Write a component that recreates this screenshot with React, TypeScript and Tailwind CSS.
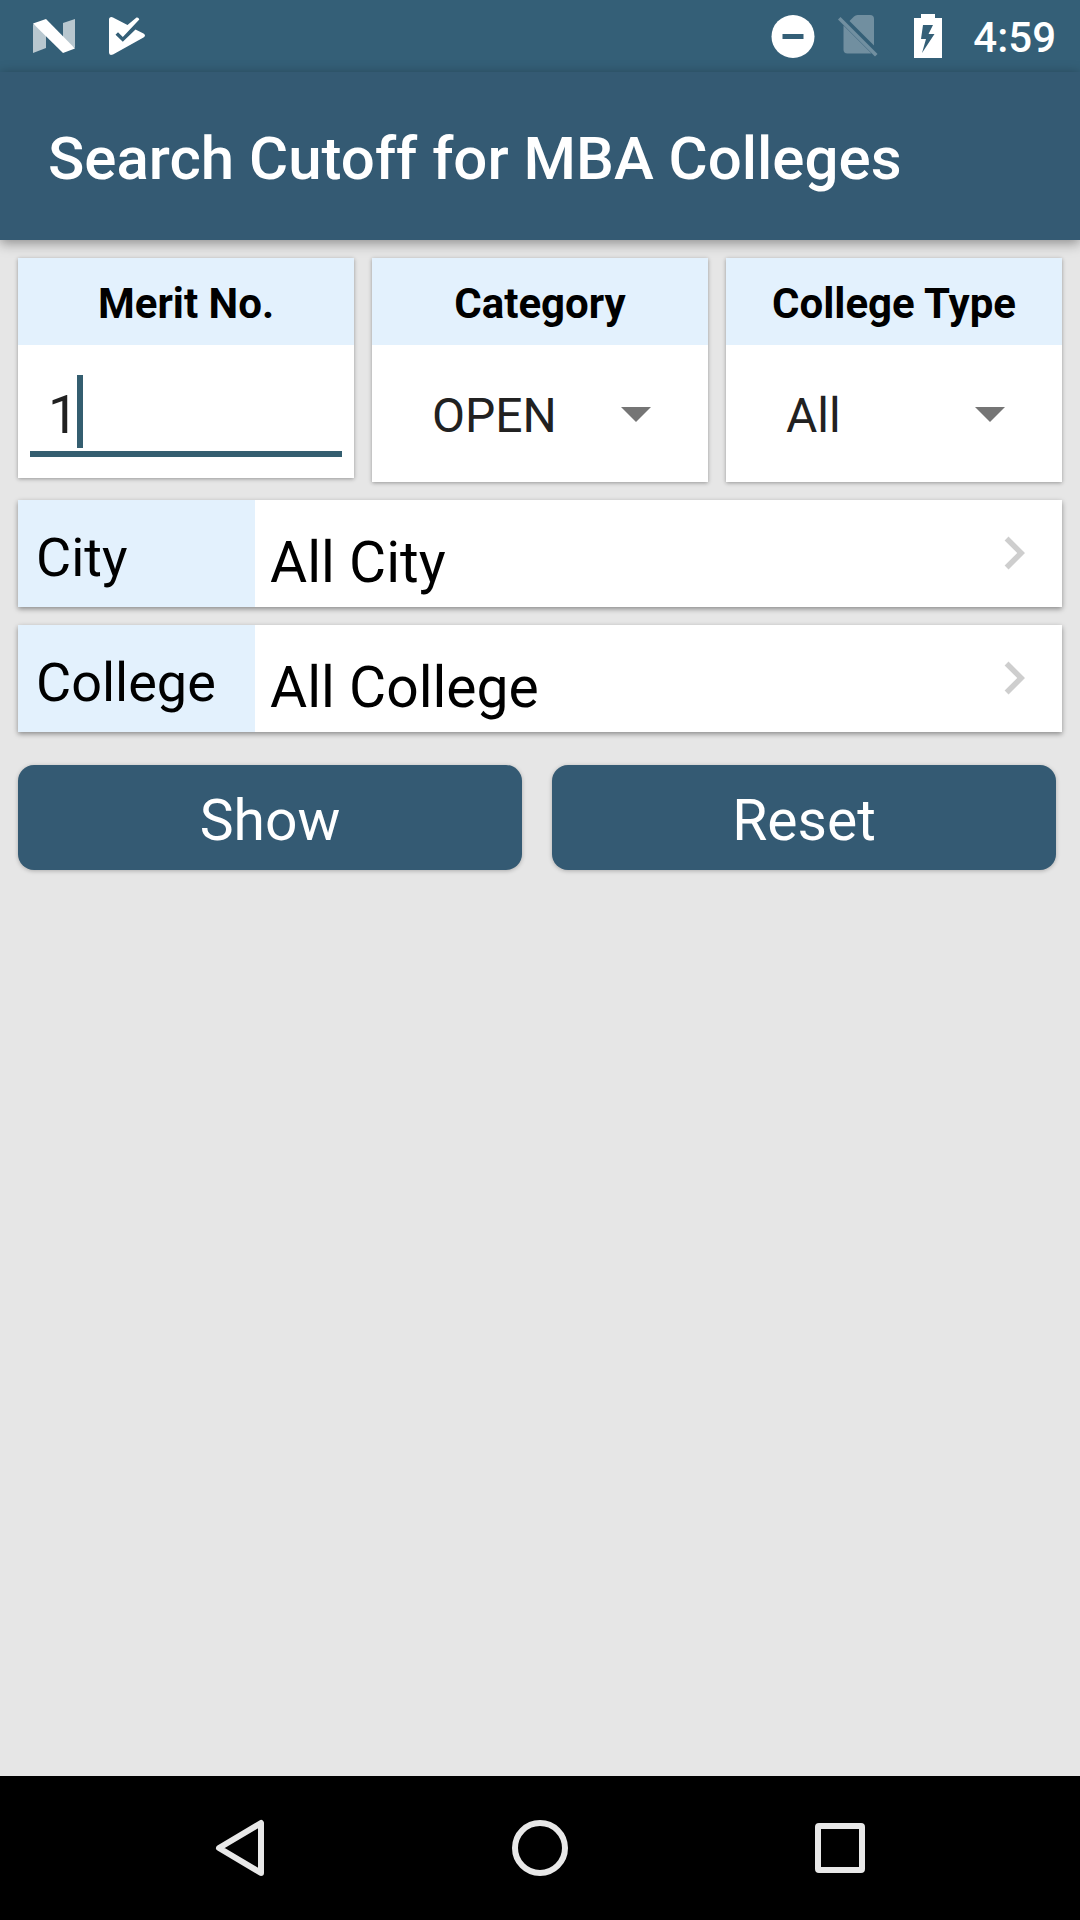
import { useState } from "react";
import type { ReactNode } from "react";

function StatusBar() {
  return (
    <div className="flex h-[72px] items-center justify-between bg-[#345f77] pl-[33px] pr-6 text-white">
      <div className="flex items-center gap-[34px]">
        <svg viewBox="0 0 42 34" className="h-[34px] w-[42px]" aria-hidden="true">
          <path d="M0 5L13 12V29L0 34Z" fill="#fff" fillOpacity=".65" />
          <path d="M30 4L42 0V29L30 22Z" fill="#fff" fillOpacity=".65" />
          <path d="M0 4.500L13 0L42 29.500L30 34Z" fill="#fff" />
        </svg>
        <svg viewBox="0 0 36 38" className="h-[38px] w-9" fill="none" aria-hidden="true">
          <path
            d="M0 2.500Q0 0 2.500 0L4 .5L18.500 8L27.500 .6Q29.500 0 30.300 2.600L13.800 20L9 15.200L6.500 17.700L13.800 24.800L26.500 12.500L34.500 16.500Q37.500 18.500 34.500 20.500L4 37.500Q0 39 0 35.500Z"
            fill="#fff"
          />
        </svg>
      </div>
      <div className="flex items-center">
        <svg viewBox="0 0 44 44" className="h-11 w-11" aria-hidden="true">
          <circle cx="22" cy="22.500" r="21.500" fill="#fff" />
          <rect x="11.500" y="20" width="21" height="5" fill="#345f77" />
        </svg>
        <svg viewBox="0 0 40 42" className="ml-[23px] h-[42px] w-10" aria-hidden="true">
          <g fill="#fff" fillOpacity=".3">
            <path d="M11.500 6L16 1.500Q17.500 0 19.500 0H32Q36 0 36 4V30.500Z" />
            <path d="M5.500 10.500L33.500 38.500H9.500Q5.500 38.500 5.500 34.500Z" />
            <path d="M0 4.500L2.500 2L39.500 39L37 41.500Z" />
          </g>
        </svg>
        <svg viewBox="0 0 28 44" className="ml-9 h-11 w-7" aria-hidden="true">
          <path
            d="M7 0H21V4H28V44H0V4H7ZM9 11L7 25H12L8 39L20.500 20H14.500L19 11Z"
            fill="#fff"
            fillRule="evenodd"
          />
        </svg>
        <time className="ml-[31px] pt-1 text-[42px] font-medium leading-[48px]">4:59</time>
      </div>
    </div>
  );
}

function FilterCard({ id, title, children }: { id: string; title: string; children: ReactNode }) {
  return (
    <div className="min-w-0 flex-1 bg-white shadow-[0_1px_4px_rgba(0,0,0,0.35)]">
      <label
        htmlFor={id}
        className="flex h-[87px] items-center justify-center bg-[#e3f1fd] pt-1 text-[42px] font-bold leading-[50px] text-black"
      >
        {title}
      </label>
      {children}
    </div>
  );
}

function Dropdown({ id, options }: { id: string; options: string[] }) {
  return (
    <div className="relative h-[137px]">
      <select
        id={id}
        className="h-full w-full cursor-pointer appearance-none bg-transparent pl-[60px] pr-[90px] pt-1 text-[48px] text-[#212121] outline-none"
      >
        {options.map((o) => (
          <option key={o}>{o}</option>
        ))}
      </select>
      <svg
        viewBox="0 0 30 15"
        className="pointer-events-none absolute right-[57px] top-[62px] h-[15px] w-[30px]"
        aria-hidden="true"
      >
        <path d="M0 0H30L15 15Z" fill="#757575" />
      </svg>
    </div>
  );
}

function PickerRow({ label, value }: { label: string; value: string }) {
  return (
    <button
      type="button"
      className="flex h-[107px] w-full cursor-pointer items-stretch bg-white text-left text-black shadow-[0_2px_5px_rgba(0,0,0,0.4)]"
    >
      <span className="flex w-[237px] shrink-0 items-center bg-[#e3f1fd] pl-[18px] pt-2 text-[54px] leading-[64px]">
        {label}
      </span>
      <span className="flex flex-1 items-center pl-[15px] pt-[18px] text-[57px] leading-[66px]">{value}</span>
      <svg viewBox="0 0 24 24" className="mr-[15px] mt-5 h-[66px] w-[66px]" aria-hidden="true">
        <path d="M10 6L8.590 7.410L13.170 12L8.590 16.590L10 18L16 12Z" fill="#cecece" />
      </svg>
    </button>
  );
}

function ActionButton({ children, onClick }: { children: ReactNode; onClick?: () => void }) {
  return (
    <button
      type="button"
      onClick={onClick}
      className="flex h-[105px] flex-1 cursor-pointer items-center justify-center rounded-2xl bg-[#345a73] pt-1.5 text-[57px] leading-[66px] text-white shadow-[0_1px_4px_rgba(0,0,0,0.25)]"
    >
      {children}
    </button>
  );
}

function NavBar() {
  const icon = "h-[60px] w-[60px]";
  return (
    <nav className="flex h-36 items-center justify-center gap-60 bg-black text-[#e8e8e8]">
      <button type="button" aria-label="Back" className="cursor-pointer">
        <svg viewBox="0 0 60 60" className={icon} fill="none" stroke="currentColor" strokeWidth="6" strokeLinejoin="round">
          <path d="M51 5V55L9 30Z" />
        </svg>
      </button>
      <button type="button" aria-label="Home" className="cursor-pointer">
        <svg viewBox="0 0 60 60" className={icon} fill="none" stroke="currentColor" strokeWidth="6">
          <circle cx="30" cy="30" r="25" />
        </svg>
      </button>
      <button type="button" aria-label="Recent apps" className="cursor-pointer">
        <svg viewBox="0 0 60 60" className={icon} fill="none" stroke="currentColor" strokeWidth="6">
          <rect x="8" y="8" width="44" height="44" rx="1" />
        </svg>
      </button>
    </nav>
  );
}

export default function App() {
  const [merit, setMerit] = useState("1");
  return (
    <div className="flex min-h-screen flex-col bg-[#e6e6e6] font-['Roboto',sans-serif]">
      <StatusBar />
      <header className="flex h-[168px] items-center bg-[#345a73] px-12 pt-1.5 shadow-[0_3px_12px_rgba(0,0,0,0.4)]">
        <h1 className="text-[60px] font-medium leading-[70px] text-white">Search Cutoff for MBA Colleges</h1>
      </header>
      <main className="flex flex-1 flex-col gap-[18px] p-[18px]">
        <div className="flex items-start gap-[18px]">
          <FilterCard id="merit" title="Merit No.">
            <div className="px-3 pb-[21px] pt-[30px]">
              <label className="flex cursor-text items-center border-b-6 border-[#345e70] pb-[3px] pl-[18px]">
                <input
                  id="merit"
                  value={merit}
                  onChange={(e) => setMerit(e.target.value)}
                  inputMode="numeric"
                  className="h-[73px] max-w-full bg-transparent pt-1.5 text-[54px] text-[#212121] caret-transparent outline-none [field-sizing:content]"
                />
                <span className="-ml-px h-[73px] w-[6px] shrink-0 bg-[#345e70]" />
              </label>
            </div>
          </FilterCard>
          <FilterCard id="category" title="Category">
            <Dropdown id="category" options={["OPEN", "OBC", "SC", "ST"]} />
          </FilterCard>
          <FilterCard id="type" title="College Type">
            <Dropdown id="type" options={["All", "Government", "Private"]} />
          </FilterCard>
        </div>
        <PickerRow label="City" value="All City" />
        <PickerRow label="College" value="All College" />
        <div className="flex gap-[30px] pr-[6px] pt-[15px]">
          <ActionButton>Show</ActionButton>
          <ActionButton onClick={() => setMerit("")}>Reset</ActionButton>
        </div>
      </main>
      <NavBar />
    </div>
  );
}
